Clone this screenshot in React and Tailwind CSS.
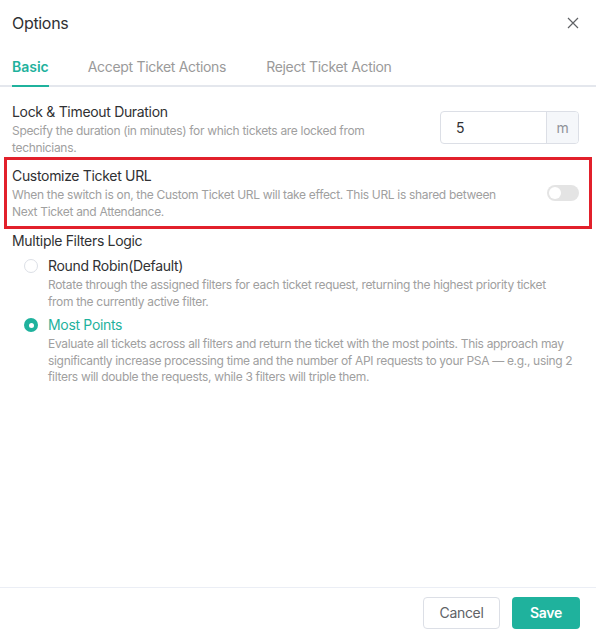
import React from "react";

const teal = "text-[#1fb29d]";

function Radio({ checked, label, desc, descClass = "" }) {
  return (
    <div className="flex gap-[10px]">
      <div className="pt-[4px]">
        {checked ? (
          <div className="w-[14px] h-[14px] rounded-full bg-[#1fb29d] flex items-center justify-center">
            <div className="w-[5px] h-[5px] rounded-full bg-white" />
          </div>
        ) : (
          <div className="w-[14px] h-[14px] rounded-full border border-[#dcdfe6] bg-white" />
        )}
      </div>
      <div className="flex-1">
        <div className={`text-[14px] leading-[22px] ${checked ? teal : "text-[#303133]"}`}>{label}</div>
        <div className={`text-[12px] leading-[16.5px] text-[#a0a0a0] ${descClass}`}>{desc}</div>
      </div>
    </div>
  );
}

export default function App() {
  return (
    <div
      className="w-[596px] h-[637px] bg-white flex flex-col tracking-[-0.02em]"
      style={{ fontFamily: "Inter, 'Noto Sans', sans-serif" }}
    >
      {/* header */}
      <div className="flex items-center justify-between pl-[12px] pr-[17px] h-[46px]">
        <div className="text-[16px] text-[#303133]">Options</div>
        <svg width="12" height="12" viewBox="0 0 12 12" className="text-[#606266]">
          <path d="M1 1L11 11M11 1L1 11" stroke="currentColor" strokeWidth="1.2" />
        </svg>
      </div>

      {/* tabs */}
      <div className="flex border-b-2 border-[#e4e7ed] px-[12px] h-[41px] items-end">
        <div className={`relative pb-[8px] text-[14px] font-semibold tracking-normal ${teal}`}>
          Basic
          <div className="absolute left-0 right-0 -bottom-[2px] h-[2px] bg-[#1fb29d]" />
        </div>
        <div className="pb-[8px] ml-[39px] text-[14px] text-[#9a9a9a]">Accept Ticket Actions</div>
        <div className="pb-[8px] ml-[40px] text-[14px] text-[#9a9a9a]">Reject Ticket Action</div>
      </div>

      {/* body */}
      <div className="flex-1 flex flex-col">
        <div className="flex items-center justify-between pl-[12px] pr-[17px] pt-[15px]">
          <div className="w-[400px]">
            <div className="text-[14px] leading-[20px] text-[#303133]">Lock &amp; Timeout Duration</div>
            <div className="text-[12px] leading-[17px] text-[#a0a0a0]">
              Specify the duration (in minutes) for which tickets are locked from technicians.
            </div>
          </div>
          <div className="flex w-[139px] h-[33px] border border-[#dcdfe6] rounded-[4px] overflow-hidden mt-[-4px]">
            <div className="flex-1 flex items-center pl-[15px] text-[14px] text-[#303133]">5</div>
            <div className="w-[32px] bg-[#f5f7fa] border-l border-[#dcdfe6] flex items-center justify-center text-[14px] text-[#909399]">
              m
            </div>
          </div>
        </div>

        <div className="mx-[4px] mt-[1px] border-[3px] border-[#e2202b] pl-[5px] pr-[10px] pt-[6px] pb-[6px] flex items-center justify-between">
          <div className="w-[510px]">
            <div className="text-[14px] leading-[20px] text-[#303133]">Customize Ticket URL</div>
            <div className="text-[12px] leading-[17px] text-[#a0a0a0]">
              When the switch is on, the Custom Ticket URL will take effect. This URL is shared between Next Ticket and Attendance.
            </div>
          </div>
          <div className="w-[32px] h-[16px] rounded-full bg-[#e4e4e4] p-[2px] flex items-center">
            <div className="w-[12px] h-[12px] rounded-full bg-white" />
          </div>
        </div>

        <div className="pl-[12px] pr-[14px] pt-[1px]">
          <div className="text-[14px] leading-[22px] text-[#303133]">Multiple Filters Logic</div>
          <div className="pl-[12px] mt-[3px] flex flex-col gap-[4px]">
            <Radio
              label="Round Robin(Default)"
              descClass="pr-[12px]"
              desc="Rotate through the assigned filters for each ticket request, returning the highest priority ticket from the currently active filter."
            />
            <Radio
              checked
              label="Most Points"
              desc="Evaluate all tickets across all filters and return the ticket with the most points. This approach may significantly increase processing time and the number of API requests to your PSA — e.g., using 2 filters will double the requests, while 3 filters will triple them."
            />
          </div>
        </div>
      </div>

      {/* footer */}
      <div className="border-t border-[#ebeef5] h-[50px] flex items-center justify-end gap-[12px] pr-[16px]">
        <button className="h-[32px] w-[77px] border border-[#dcdfe6] rounded-[4px] text-[14px] text-[#606266] bg-white">
          Cancel
        </button>
        <button className="h-[32px] w-[68px] rounded-[4px] text-[14px] font-semibold text-white bg-[#1fb29d]">
          Save
        </button>
      </div>
    </div>
  );
}
